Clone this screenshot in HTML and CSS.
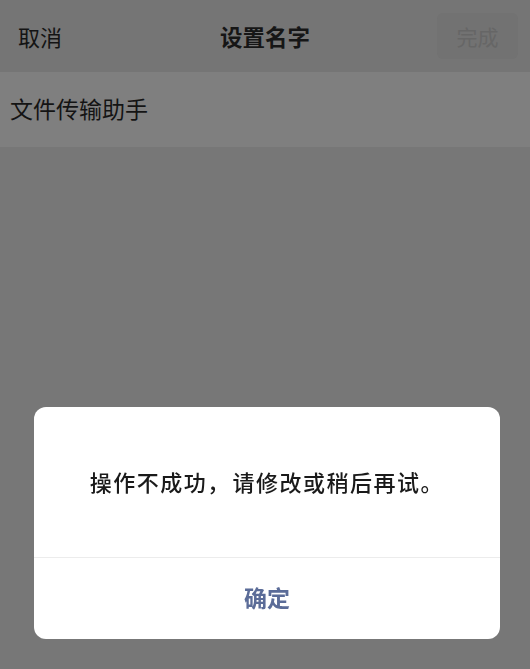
FILE: index.html
```html
<!DOCTYPE html>
<html lang="zh-CN">
<head>
<meta charset="utf-8">
<link rel="stylesheet" href="styles.css">
</head>
<body>
<div class="page">
  <header class="nav">
    <span class="nav-cancel">取消</span>
    <span class="nav-title">设置名字</span>
    <span class="nav-done">完成</span>
  </header>
  <div class="field">
    <span class="field-text">文件传输助手</span>
  </div>
</div>
<div class="dialog">
  <div class="dialog-msg"><p class="msg-text">操作不成功<span class="punct">，</span>请修改或稍后再试<span class="punct">。</span></p></div>
  <div class="dialog-btn">确定</div>
</div>
</body>
</html>
```
FILE: styles.css
```css
html, body {
  margin: 0;
  padding: 0;
  height: 100%;
}
body {
  background: #777777;
  font-family: "Noto Sans CJK SC", "Noto Sans", sans-serif;
  color: #111;
}
.page {
  display: flex;
  flex-direction: column;
}
.nav {
  height: 72px;
  background: #757575;
  display: grid;
  grid-template-columns: 1fr auto 1fr;
  align-items: center;
  padding: 0 12px 0 18px;
  box-sizing: border-box;
}
.nav-cancel {
  font-size: 22px;
  color: #141414;
  justify-self: start;
}
.nav-title {
  font-size: 22.5px;
  font-weight: 700;
  color: #161616;
  margin-left: -6px;
}
.nav-done {
  justify-self: end;
  width: 81px;
  height: 46px;
  border-radius: 6px;
  background: #727272;
  color: #666666;
  font-size: 21px;
  display: flex;
  align-items: center;
  justify-content: center;
}
.field {
  height: 75px;
  background: #7f7f7f;
  display: flex;
  align-items: center;
  padding-left: 10px;
}
.field-text {
  font-size: 23px;
  color: #141414;
  margin-top: -4px;
}
.dialog {
  position: fixed;
  left: 34px;
  right: 30px;
  top: 407px;
  height: 232px;
  background: #fff;
  border-radius: 12px;
  display: flex;
  flex-direction: column;
  overflow: hidden;
}
.dialog-msg {
  height: 151px;
  display: flex;
  align-items: center;
  justify-content: center;
  border-bottom: 1px solid #ececec;
  padding-bottom: 2px;
  box-sizing: border-box;
}
.msg-text {
  margin: 0;
  font-size: 22px;
  font-weight: 500;
  color: #1a1a1a;
  white-space: nowrap;
  letter-spacing: 1.5px;
  margin-right: -1.5px;
}
.punct {
  display: inline-block;
  width: 1.15em;
  text-align: left;
}
.dialog-btn {
  flex: 1;
  display: flex;
  align-items: center;
  justify-content: center;
  font-size: 23px;
  font-weight: 700;
  color: #5b6c98;
  padding-bottom: 4px;
}
```
